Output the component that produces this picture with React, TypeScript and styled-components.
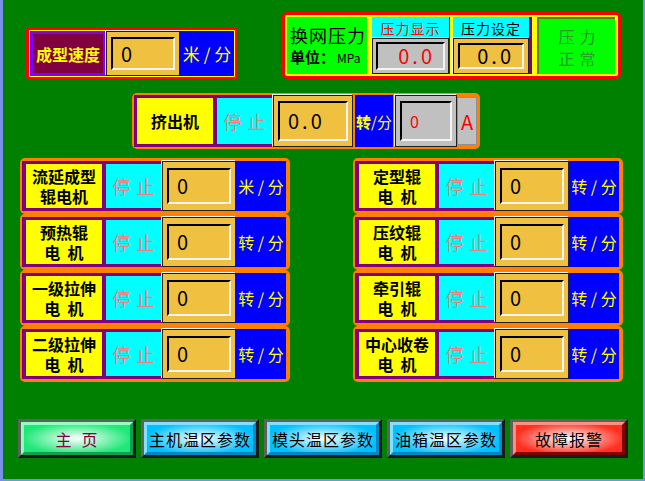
import React from 'react';
import styled, { createGlobalStyle, css } from 'styled-components';

const GlobalStyle = createGlobalStyle`
  html, body {
    margin: 0;
    padding: 0;
  }
  body {
    font-family: "Noto Sans CJK SC", "Noto Sans", sans-serif;
  }
`;

const Screen = styled.div`
  width: 645px;
  height: 481px;
  box-sizing: border-box;
  background: #008000;
  border-left: 3px solid #7890e8;
  border-right: 2px solid #7890e8;
  border-bottom: 2px solid #7890e8;
  display: flex;
  flex-direction: column;
  overflow: hidden;
`;

const TopRow = styled.div`
  display: flex;
  align-items: flex-start;
  justify-content: space-between;
  margin-top: 12px;
  padding: 0 22px 0 23px;
`;

/* ---------- shared pieces ---------- */

const Sunken = styled.div<{ $align?: 'left' | 'right'; $color?: string; $size?: number }>`
  flex: 1;
  display: flex;
  align-items: center;
  justify-content: ${(p) => (p.$align === 'right' ? 'flex-end' : 'flex-start')};
  padding: 0 8px;
  border-top: 2px solid #000;
  border-left: 2px solid #000;
  border-bottom: 2px solid #f4f4f4;
  border-right: 2px solid #f4f4f4;
  color: ${(p) => p.$color || '#000'};
  font-size: ${(p) => p.$size || 20}px;
  letter-spacing: 3px;
  line-height: 1;
`;

const InputBox = styled.div<{ $w: number; $tone?: 'gold' | 'gray'; $pad?: string; $ml?: number }>`
  width: ${(p) => p.$w}px;
  margin-left: ${(p) => p.$ml || 0}px;
  box-sizing: border-box;
  display: flex;
  background: ${(p) => (p.$tone === 'gray' ? '#c0c0c0' : '#f0c040')};
  border: 1px solid #202020;
  box-shadow: -1px -1px 0 #f0f0f0;
  padding: ${(p) => p.$pad || '5px 4px'};
`;

const Unit = styled.div<{ $w: number; $size?: number; $ml?: number }>`
  width: ${(p) => p.$w}px;
  margin-left: ${(p) => p.$ml || 0}px;
  box-sizing: border-box;
  background: #0000ff;
  color: #ffff00;
  display: flex;
  align-items: center;
  justify-content: center;
  font-size: ${(p) => p.$size || 16}px;
  white-space: pre;
`;

const Status = styled.div<{ $w: number }>`
  width: ${(p) => p.$w}px;
  box-sizing: border-box;
  background: #00ffff;
  color: #f08080;
  display: flex;
  align-items: center;
  justify-content: center;
  font-size: 18px;
  letter-spacing: 6px;
  padding-left: 6px;
`;

const Label = styled.div<{ $w: number }>`
  width: ${(p) => p.$w}px;
  box-sizing: border-box;
  background: #ffff00;
  color: #000;
  font-weight: 700;
  font-size: 16px;
  line-height: 20px;
  display: flex;
  flex-direction: column;
  align-items: center;
  justify-content: center;
  text-align: center;
  white-space: pre;
`;

const PurpleGroup = styled.div<{ $pad: string }>`
  display: flex;
  gap: 4px;
  background: #800080;
  padding: ${(p) => p.$pad};
`;

/* ---------- 成型速度 ---------- */

const SpeedPanel = styled.div`
  margin-top: 15px;
  width: 212px;
  height: 53px;
  box-sizing: border-box;
  border: 3px solid #ff0000;
  border-radius: 4px;
  background: #ffff00;
  padding: 1px;
  display: flex;
`;

const SpeedLabel = styled.div`
  width: 76px;
  box-sizing: border-box;
  border: 3px solid #8000ff;
  background: #800040;
  color: #ffff00;
  font-weight: 700;
  font-size: 16px;
  display: flex;
  align-items: center;
  justify-content: center;
`;

/* ---------- 换网压力 ---------- */

const PressurePanel = styled.div`
  width: 339px;
  height: 67px;
  box-sizing: border-box;
  border: 3px solid #ff0000;
  border-radius: 5px;
  background: #ffff00;
  padding: 2px;
  display: flex;
`;

const PressureTitle = styled.div`
  width: 80px;
  background: #00ff00;
  display: flex;
  flex-direction: column;
  justify-content: center;
  padding-left: 3px;
  box-sizing: border-box;
  gap: 2px;
  color: #000;
`;

const TitleMain = styled.div`
  font-size: 18px;
  line-height: 22px;
  letter-spacing: 1px;
`;

const TitleUnit = styled.div`
  font-size: 15px;
  line-height: 18px;
  font-weight: 700;
  span {
    font-weight: 400;
    font-size: 12px;
    margin-left: 2px;
  }
`;

const PressureCell = styled.div<{ $w: number; $ml: number; $edge: number }>`
  width: ${(p) => p.$w}px;
  margin-left: ${(p) => p.$ml}px;
  box-sizing: border-box;
  display: flex;
  flex-direction: column;
  border-right: ${(p) => p.$edge}px solid #800080;
  background: #00ffff;
`;

const CellHead = styled.div<{ $color: string }>`
  height: 21px;
  color: ${(p) => p.$color};
  font-size: 14px;
  display: flex;
  align-items: center;
  justify-content: center;
  letter-spacing: 1px;
`;

const CellBody = styled.div`
  flex: 1;
  display: flex;
  background: #ffff00;
`;

const PressureState = styled.div`
  width: 78px;
  margin-left: 5px;
  box-sizing: border-box;
  background: #00ff00;
  border-left: 2px solid #5a7a00;
  border-top: 2px solid #5a7a00;
  color: #2a9a2a;
  font-size: 16px;
  line-height: 22px;
  letter-spacing: 5px;
  padding-left: 5px;
  display: flex;
  flex-direction: column;
  align-items: center;
  justify-content: center;
`;

/* ---------- 挤出机 ---------- */

const ExtruderRow = styled.div`
  margin: 13px 0 0 129px;
  width: 348px;
  height: 56px;
  box-sizing: border-box;
  background: #ff8000;
  border-radius: 5px;
  padding: 2px;
  display: flex;
`;

const AmpBox = styled.div`
  width: 20px;
  margin: 2px 0;
  box-sizing: border-box;
  background: #c0c0c0;
  border: 1px solid #909090;
  color: #ff0000;
  font-size: 20px;
  display: flex;
  align-items: center;
  justify-content: center;
`;

/* ---------- 电机 ---------- */

const MotorGrid = styled.div`
  display: grid;
  grid-template-columns: 270px 270px;
  grid-auto-rows: 56px;
  column-gap: 63px;
  margin: 9px 0 0 17px;
`;

const MotorRow = styled.div`
  box-sizing: border-box;
  background: #ff8000;
  border-radius: 5px;
  padding: 3px 3px 3px 2px;
  display: flex;
`;

/* ---------- 底部按钮 ---------- */

const ButtonBar = styled.div`
  display: flex;
  gap: 5px;
  margin: 37px 0 0 15px;
`;

const tones = {
  green: { face: '#20e878', light: '#90ffc0', dark: '#10a050' },
  blue: { face: '#00c0ff', light: '#80e0ff', dark: '#0088c0' },
  red: { face: '#ff3020', light: '#ff9080', dark: '#800000' },
};

type Tone = keyof typeof tones;

const NavButton = styled.div<{ $tone: Tone }>`
  width: 118px;
  height: 39px;
  box-sizing: border-box;
  border-style: solid;
  border-width: 3px;
  border-color: #606060 #1a1a1a #1a1a1a #606060;
  display: flex;
  ${(p) => {
    const t = tones[p.$tone];
    return css`
      > div {
        background: radial-gradient(ellipse 60% 70% at center, #ffffff 0%, ${t.face} 85%);
        border-color: ${t.light} ${t.dark} ${t.dark} ${t.light};
      }
    `;
  }}
`;

const ButtonFace = styled.div<{ $color?: string }>`
  flex: 1;
  border-style: solid;
  border-width: 3px;
  display: flex;
  align-items: center;
  justify-content: center;
  color: ${(p) => p.$color || '#000'};
  font-size: 16px;
  letter-spacing: 1px;
  white-space: pre;
`;

type Motor = { name: string; unit: string };

const leftMotors: Motor[] = [
  { name: '流延成型\n辊电机', unit: '米 / 分' },
  { name: '预热辊\n电  机', unit: '转 / 分' },
  { name: '一级拉伸\n电  机', unit: '转 / 分' },
  { name: '二级拉伸\n电  机', unit: '转 / 分' },
];

const rightMotors: Motor[] = [
  { name: '定型辊\n电  机', unit: '转 / 分' },
  { name: '压纹辊\n电  机', unit: '转 / 分' },
  { name: '牵引辊\n电  机', unit: '转 / 分' },
  { name: '中心收卷\n电  机', unit: '转 / 分' },
];

const buttons: { text: string; tone: Tone; color?: string }[] = [
  { text: '主  页', tone: 'green', color: '#800040' },
  { text: '主机温区参数', tone: 'blue' },
  { text: '模头温区参数', tone: 'blue' },
  { text: '油箱温区参数', tone: 'blue' },
  { text: '故障报警', tone: 'red' },
];

function MotorLine({ motor }: { motor: Motor }) {
  return (
    <MotorRow>
      <PurpleGroup $pad="3px 1px 3px 4px">
        <Label $w={76}>{motor.name}</Label>
        <Status $w={55}>停止</Status>
      </PurpleGroup>
      <InputBox $w={74} $pad="6px 4px">
        <Sunken>0</Sunken>
      </InputBox>
      <Unit $w={50}>{motor.unit}</Unit>
    </MotorRow>
  );
}

export default function App() {
  const rows: Motor[] = [];
  leftMotors.forEach((m, i) => {
    rows.push(m, rightMotors[i]);
  });

  return (
    <Screen>
      <GlobalStyle />
      <TopRow>
        <SpeedPanel>
          <SpeedLabel>成型速度</SpeedLabel>
          <InputBox $w={74} $pad="5px 4px">
            <Sunken>0</Sunken>
          </InputBox>
          <Unit $w={54} $size={17}>米 / 分</Unit>
        </SpeedPanel>

        <PressurePanel>
          <PressureTitle>
            <TitleMain>换网压力</TitleMain>
            <TitleUnit>
              单位：<span>MPa</span>
            </TitleUnit>
          </PressureTitle>
          <PressureCell $w={78} $ml={5} $edge={1}>
            <CellHead $color="#ff0000">压力显示</CellHead>
            <CellBody>
              <InputBox $w={77} $tone="gray" $pad="3px 3px">
                <Sunken $align="right" $color="#ff0000">0.0</Sunken>
              </InputBox>
            </CellBody>
          </PressureCell>
          <PressureCell $w={79} $ml={3} $edge={3}>
            <CellHead $color="#000">压力设定</CellHead>
            <CellBody>
              <InputBox $w={76} $pad="4px 4px">
                <Sunken $align="right">0.0</Sunken>
              </InputBox>
            </CellBody>
          </PressureCell>
          <PressureState>
            <div>压力</div>
            <div>正常</div>
          </PressureState>
        </PressurePanel>
      </TopRow>

      <ExtruderRow>
        <PurpleGroup $pad="3px 0 3px 3px">
          <Label $w={76}>挤出机</Label>
          <Status $w={55}>停止</Status>
        </PurpleGroup>
        <InputBox $w={80} $pad="5px 4px" $ml={1}>
          <Sunken>0.0</Sunken>
        </InputBox>
        <Unit $w={38} $size={15} $ml={2}>
          <b>转</b>/分
        </Unit>
        <InputBox $w={62} $tone="gray" $pad="5px 4px" $ml={2}>
          <Sunken $color="#ff0000" $size={16}>0</Sunken>
        </InputBox>
        <AmpBox>A</AmpBox>
      </ExtruderRow>

      <MotorGrid>
        {rows.map((m) => (
          <MotorLine key={m.name} motor={m} />
        ))}
      </MotorGrid>

      <ButtonBar>
        {buttons.map((b) => (
          <NavButton key={b.text} $tone={b.tone}>
            <ButtonFace $color={b.color}>{b.text}</ButtonFace>
          </NavButton>
        ))}
      </ButtonBar>
    </Screen>
  );
}
